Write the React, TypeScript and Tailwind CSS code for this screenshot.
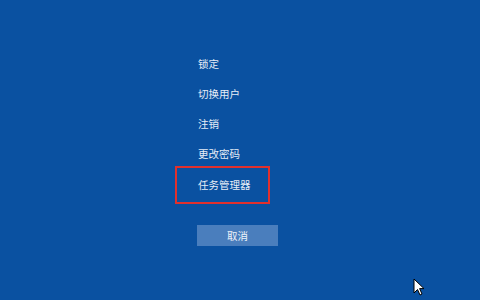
import React from "react";

const items = ["锁定", "切换用户", "注销", "更改密码"];

export default function App() {
  return (
    <div
      className="relative w-[480px] h-[300px] overflow-hidden bg-[#0a51a1] text-[#e6edf7]"
      style={{ fontFamily: '"Noto Sans CJK SC", "Noto Sans", sans-serif' }}
    >
      <div className="flex flex-col w-[95px] ml-[175px] pt-[49px]">
        {items.map((t) => (
          <div key={t} className="h-[30px] flex items-center pl-[23px] text-[10.5px]">
            {t}
          </div>
        ))}
        <div className="h-[38px] -mt-[3px] flex items-center pl-[21px] text-[10.5px] border-2 border-[#e2302c]">
          任务管理器
        </div>
        <button className="mt-[21px] ml-[22px] w-[81px] h-[21px] bg-[#4a7ebd] text-[10.5px] text-[#eef3fa] flex items-center justify-center">
          取消
        </button>
      </div>
      <svg
        className="absolute left-[413px] top-[278px]"
        width="12"
        height="19"
        viewBox="0 0 12 19"
      >
        <path
          d="M1 1 L1 15 L4.5 11.5 L7 17 L9 16 L6.6 10.6 L11 10.6 Z"
          fill="#fff"
          stroke="#000"
          strokeWidth="1"
          strokeLinejoin="miter"
        />
      </svg>
    </div>
  );
}
